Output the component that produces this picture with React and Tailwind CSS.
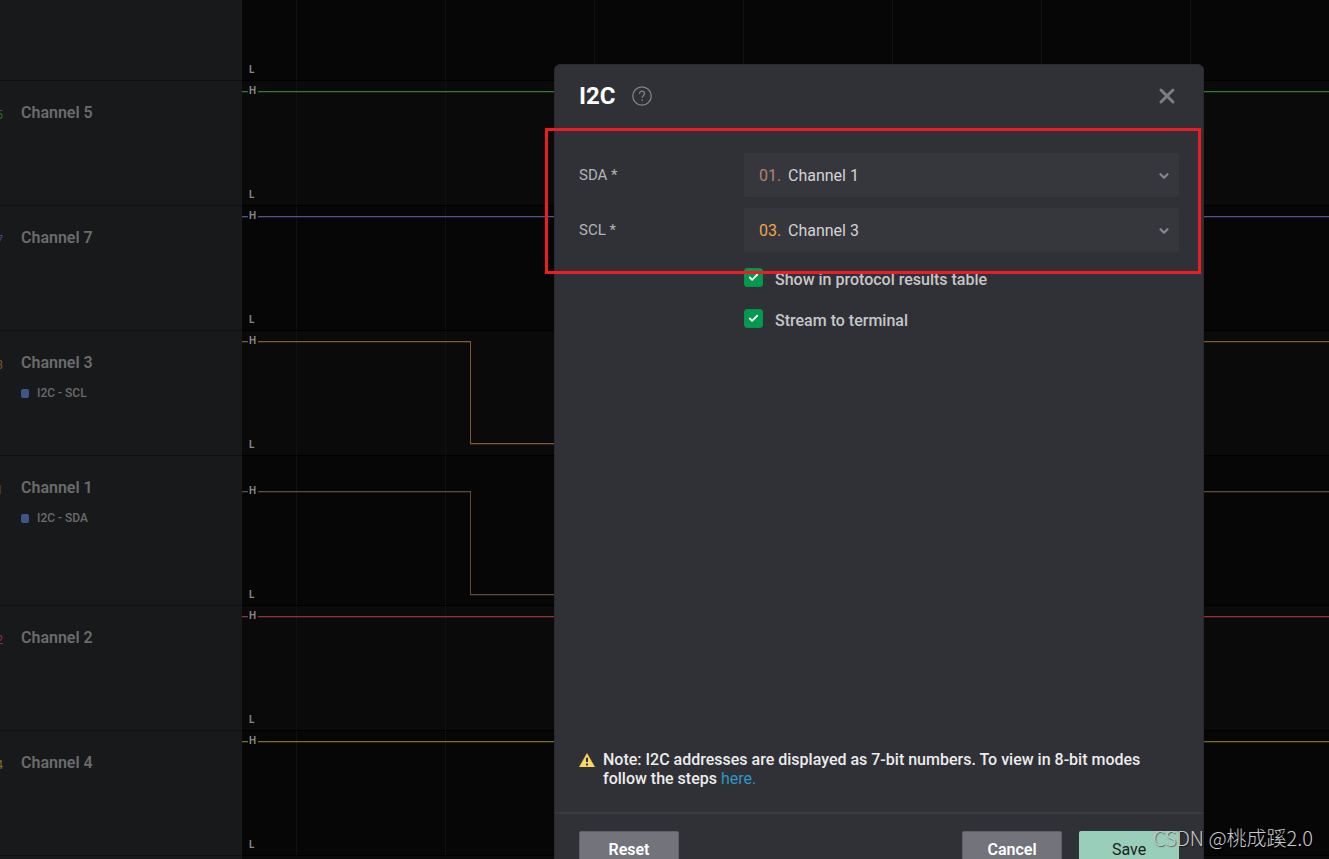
import { useState } from 'react';
import { X, ChevronDown, Check } from 'lucide-react';

const channels = [
  { id: 5, number: 'text-[#2a6b2f]', color: '#2f7a35', height: 'h-[125px]', high: 10, low: 113 },
  { id: 7, number: 'text-[#4f4580]', color: '#5a4f8a', height: 'h-[125px]', high: 10, low: 113 },
  { id: 3, number: 'text-[#7f5728]', color: '#80592c', height: 'h-[125px]', high: 10, low: 112, tag: 'I2C - SCL', falls: true },
  { id: 1, number: 'text-[#5c4539]', color: '#604a3e', height: 'h-[150px]', high: 35, low: 138, tag: 'I2C - SDA', falls: true },
  { id: 2, number: 'text-[#8a2f38]', color: '#8e323c', height: 'h-[125px]', high: 10, low: 113 },
  { id: 4, number: 'text-[#7d711d]', color: '#7d6c25', height: 'h-[125px]', high: 10, low: 113 },
];

const gridLines = [54, 203, 352, 501, 650, 799, 948];

const channelOptions = [
  { value: '1', prefix: '01.', color: 'text-[#b5816b]' },
  { value: '2', prefix: '02.', color: 'text-[#ed4452]' },
  { value: '3', prefix: '03.', color: 'text-[#f0a54a]' },
  { value: '4', prefix: '04.', color: 'text-[#e0cb35]' },
  { value: '5', prefix: '05.', color: 'text-[#4bb653]' },
  { value: '7', prefix: '07.', color: 'text-[#8d7fd6]' },
];

function GridLines() {
  return gridLines.map((x) => (
    <line key={x} x1={x + 0.5} x2={x + 0.5} y1="0" y2="100%" stroke="#111112" />
  ));
}

function Trace({ channel }) {
  const { high, low, color, falls } = channel;
  const d = falls
    ? `M0 ${high + 0.5}H228.5V${low + 0.5}H640V${high + 0.5}H4000`
    : `M0 ${high + 0.5}H4000`;

  return (
    <svg className="h-full w-full" shapeRendering="crispEdges" aria-hidden="true">
      <GridLines />
      {/* faint second pass under the line */}
      <path d={d} fill="none" stroke={color} strokeOpacity="0.3" transform="translate(0 1)" />
      <path d={d} fill="none" stroke={color} />
    </svg>
  );
}

function ChannelRow({ channel, shade }) {
  return (
    <div className={`flex ${channel.height}`}>
      <div className="flex w-[242px] shrink-0 gap-[18px] border-b border-[#101112] bg-[#18191b] pt-5">
        <div className="flex h-6 w-[3px] items-end justify-end overflow-hidden">
          <span className={`text-xs leading-5 ${channel.number}`}>{channel.id}</span>
        </div>
        <div>
          <h2 className="text-base font-semibold text-[#6a6b6d]">Channel {channel.id}</h2>
          {channel.tag && (
            <p className="mt-[10px] flex items-center gap-2 text-xs font-medium text-[#6a6b6d]">
              <span className="h-[9px] w-2 rounded-xs bg-[#405488]" />
              {channel.tag}
            </p>
          )}
        </div>
      </div>
      <div className={`relative min-w-0 flex-1 overflow-hidden border-b border-black ${shade}`}>
        <Trace channel={channel} />
        <div className={`absolute inset-x-0 bottom-1 flex flex-col justify-between pl-[6px] text-[10px] leading-[13px] font-bold text-[#858585] ${channel.high > 20 ? 'top-7' : 'top-[3px]'}`}>
          <span className={`w-[10px] pl-px ${shade}`}>H</span>
          <span className="w-[10px] pl-px">L</span>
        </div>
      </div>
    </div>
  );
}

function ChannelSelect({ id, label, defaultValue }) {
  const [value, setValue] = useState(defaultValue);
  const selected = channelOptions.find((option) => option.value === value);

  return (
    <div className="flex items-center">
      <label htmlFor={id} className="w-[165px] shrink-0 text-[15px] text-[#b4b4b8]">
        {label} *
      </label>
      <div className="relative flex-1">
        <span className={`pointer-events-none absolute top-[11px] left-[15px] text-base ${selected.color}`}>
          {selected.prefix}
        </span>
        <select
          id={id}
          value={value}
          onChange={(e) => setValue(e.target.value)}
          className="h-11 w-full appearance-none rounded-xs bg-[#36373c] pt-[2px] pr-10 pl-11 text-base text-[#d3d3d5] focus:outline-none"
        >
          {channelOptions.map((option) => (
            <option key={option.value} value={option.value}>
              Channel {option.value}
            </option>
          ))}
        </select>
        <ChevronDown className="pointer-events-none absolute top-4 right-2 h-[14px] w-[14px] text-[#85858f]" strokeWidth={4} />
      </div>
    </div>
  );
}

function CheckOption({ label }) {
  const [checked, setChecked] = useState(true);

  return (
    <label className="flex items-start gap-3 text-base font-medium text-[#c6c6c9]">
      <span className="relative">
        <input
          type="checkbox"
          checked={checked}
          onChange={(e) => setChecked(e.target.checked)}
          className="block h-[19px] w-[19px] appearance-none rounded-[3px] border border-[#0a8f4c] bg-[#44454b] checked:bg-[#039a50]"
        />
        {checked && <Check className="pointer-events-none absolute top-1 left-1 h-[11px] w-[11px] text-white" strokeWidth={4} />}
      </span>
      {label}
    </label>
  );
}

function HelpIcon() {
  return (
    <svg viewBox="0 0 20 20" className="h-5 w-5" fill="none" stroke="#808087" strokeWidth="1.3" aria-hidden="true">
      <circle cx="10" cy="10" r="9.2" />
      <path d="M7.5 7.8c0-1.6 1-2.6 2.5-2.6s2.5 1 2.5 2.3c0 1.9-2.3 2-2.3 4.3" />
      <path d="M10.2 13.5v1.5" />
    </svg>
  );
}

function WarningIcon() {
  return (
    <svg viewBox="0 0 16 14" className="mt-[3px] h-[14px] w-4 shrink-0" aria-hidden="true">
      <path d="M8 0.5L15.7 14H0.3Z" fill="#fcd567" stroke="#fcd567" strokeLinejoin="round" strokeWidth="0.5" />
      <path d="M7 4.8h2v4.2H7zM7 10.5h2v2H7z" fill="#303136" />
    </svg>
  );
}

function AnalyzerDialog() {
  return (
    <div
      role="dialog"
      aria-labelledby="dialog-title"
      className="relative flex flex-1 flex-col rounded-t-md border border-[#292a2e] bg-[#303136]"
    >
      <header className="flex h-[65px] shrink-0 items-center gap-4 border-b-2 border-[#36373c] px-6 pb-[2px]">
        <h1 id="dialog-title" className="text-2xl font-bold text-white">I2C</h1>
        <button type="button" aria-label="Help">
          <HelpIcon />
        </button>
        <button type="button" aria-label="Close" className="ml-auto text-[#7c7c82]">
          <X className="h-6 w-6" strokeWidth={3} />
        </button>
      </header>

      <div className="flex flex-1 flex-col px-6 pt-[23px]">
        <div className="flex flex-col gap-[11px]">
          <ChannelSelect id="sda" label="SDA" defaultValue="1" />
          <ChannelSelect id="scl" label="SCL" defaultValue="3" />
        </div>
        <div className="mt-4 ml-[165px] flex flex-col gap-[17px]">
          <CheckOption label="Show in protocol results table" />
          <CheckOption label="Stream to terminal" />
        </div>
        <div className="mt-auto mb-6 flex gap-2">
          <WarningIcon />
          <p className="text-base leading-[19px] font-medium text-[#ececec]">
            Note: I2C addresses are displayed as 7-bit numbers. To view in 8-bit modes follow the steps{' '}
            <a href="#steps" className="font-normal text-[#2d96c4]">here.</a>
          </p>
        </div>
      </div>

      <footer className="flex gap-[17px] border-t-2 border-[#3b3c42] px-6 py-[17px] text-base text-white">
        <button type="button" className="mr-auto h-9 w-[100px] rounded-xs border border-[#606068] bg-[#73737b] pt-[2px] font-semibold">Reset</button>
        <button type="button" className="h-9 w-[100px] rounded-xs border border-[#606068] bg-[#73737b] pt-[2px] font-semibold">Cancel</button>
        <button type="button" className="h-9 w-[100px] rounded-xs bg-[#99cfba] pt-[2px] text-[#1b1c1e]">Save</button>
      </footer>

      <div className="pointer-events-none absolute top-[63px] right-[2px] -left-[10px] h-[146px] border-3 border-[#ed1c24]" />
    </div>
  );
}

export default function App() {
  return (
    <main className="relative h-screen overflow-hidden bg-black font-['Roboto',sans-serif]">
      <div className="flex h-[81px]">
        <div className="w-[242px] shrink-0 border-b border-[#101112] bg-[#18191b]" />
        <div className="relative flex-1 border-b border-black bg-[#060606]">
          <svg className="h-full w-full" shapeRendering="crispEdges" aria-hidden="true">
            <GridLines />
          </svg>
          <span className="absolute bottom-1 left-[7px] text-[10px] leading-[13px] font-bold text-[#858585]">L</span>
        </div>
      </div>
      {channels.map((channel, index) => (
        <ChannelRow key={channel.id} channel={channel} shade={index % 2 ? 'bg-[#060606]' : 'bg-[#0a0a0a]'} />
      ))}
      <div className="flex h-6">
        <div className="w-[242px] shrink-0 bg-[#18191b]" />
        <div className="flex-1 bg-[#0a0a0a]" />
      </div>

      <div className="absolute inset-x-0 top-0 -bottom-[26px] flex pt-16 pr-[125px] pl-[554px]">
        <AnalyzerDialog />
      </div>

      <p className="absolute right-4 bottom-[5px] font-['Noto_Sans_CJK_SC',sans-serif] text-[20px] leading-8 font-light text-[#c9c9c9] [text-shadow:1px_1px_1px_#0008]">
        CSDN @桃成蹊2.0
      </p>
    </main>
  );
}
